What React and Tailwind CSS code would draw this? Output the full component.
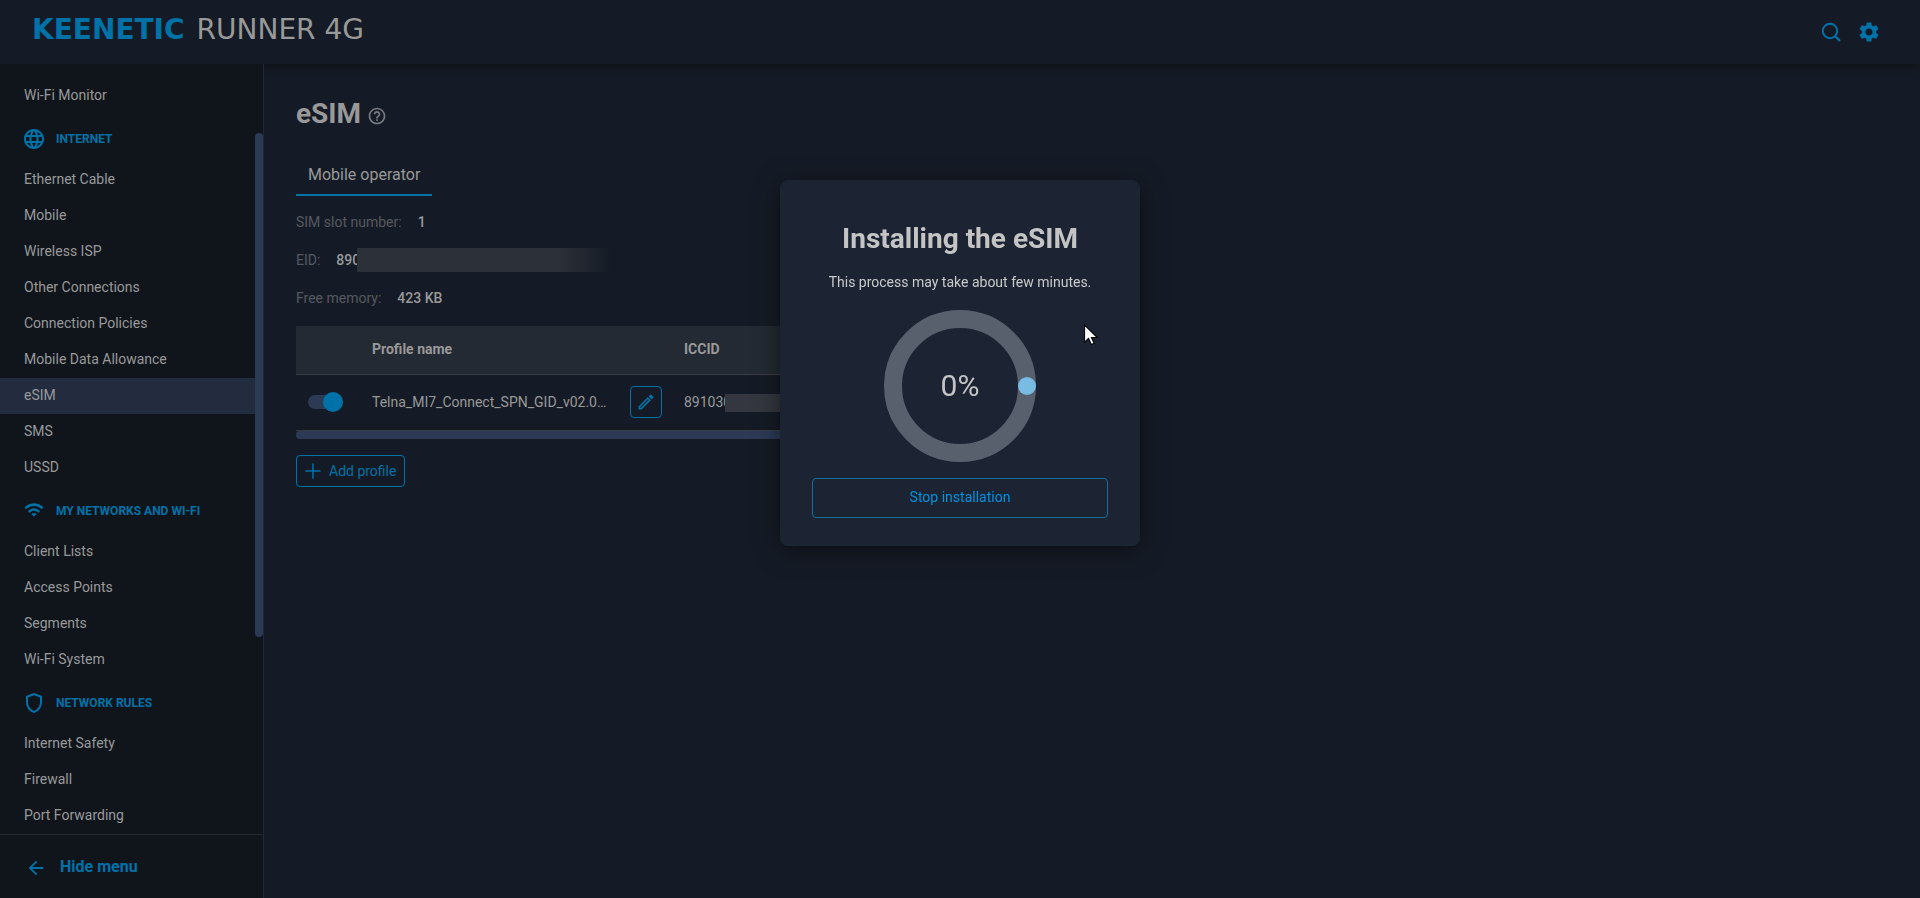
import { MdLanguage, MdOutlineShield, MdSettings, MdOutlineEdit, MdHelpOutline, MdArrowBack } from 'react-icons/md'
import { Plus } from 'lucide-react'

function SearchIcon({ className }) {
  return (
    <svg viewBox="0 0 24 24" fill="none" stroke="currentColor" strokeWidth="2" strokeLinecap="round" className={className}>
      <circle cx="11" cy="11" r="7.2" />
      <path d="M16.2 16.2l4.2 4.2" strokeWidth="2.2" />
    </svg>
  )
}

function WifiIcon({ className }) {
  return (
    <svg viewBox="0 0 24 24" fill="none" stroke="currentColor" strokeWidth="2.6" strokeLinecap="round" className={className}>
      <path d="M4.2 8.4a12.4 12.4 0 0 1 15.6 0" />
      <path d="M7.6 12.2a7.2 7.2 0 0 1 8.8 0" />
      <path d="M12 17.6l-2.6-2.4a3.8 3.8 0 0 1 5.2 0z" fill="currentColor" stroke="none" />
    </svg>
  )
}

const SECTIONS = [
  { items: ['Wi-Fi Monitor'] },
  {
    title: 'Internet',
    icon: MdLanguage,
    items: ['Ethernet Cable', 'Mobile', 'Wireless ISP', 'Other Connections', 'Connection Policies', 'Mobile Data Allowance', 'eSIM', 'SMS', 'USSD'],
  },
  { title: 'My Networks and Wi-Fi', icon: WifiIcon, items: ['Client Lists', 'Access Points', 'Segments', 'Wi-Fi System'] },
  { title: 'Network Rules', icon: MdOutlineShield, items: ['Internet Safety', 'Firewall', 'Port Forwarding'] },
]

const ACTIVE = 'eSIM'

function Header() {
  return (
    <header className="relative z-10 flex h-16 shrink-0 items-center justify-between bg-[#151b26] pl-8 pr-[39px] shadow-[0_2px_12px_rgba(0,0,0,0.45)]">
      <a href="#" className="flex items-center gap-3 pb-1 font-['DejaVu_Sans',sans-serif] text-[28px] leading-8">
        <span className="font-bold text-[#0072a8]">KEENETIC</span>
        <span className="text-[#999]">RUNNER 4G</span>
      </a>
      <div className="flex items-center gap-3.5 text-[#0072a8]">
        <button type="button" aria-label="Search"><SearchIcon className="size-6" /></button>
        <button type="button" aria-label="Settings"><MdSettings className="size-6" /></button>
      </div>
    </header>
  )
}

function Sidebar() {
  return (
    <aside className="relative z-20 flex w-66 shrink-0 flex-col border-r border-[#1f2838] bg-[#10151c]">
      <nav className="relative min-h-0 flex-1 overflow-hidden pt-3.5">
        {SECTIONS.map(({ title, icon: Icon, items }, i) => (
          <section key={i}>
            {title && (
              <h2 className="flex h-12 items-center gap-2.5 pl-5.5 pt-0.5 text-xs font-bold uppercase text-[#0072a8]">
                <Icon className="size-6" />
                {title}
              </h2>
            )}
            <ul>
              {items.map(item => (
                <li key={item}>
                  <a
                    href="#"
                    className={`flex h-9 items-center pb-0.5 pl-6 text-sm ${item === ACTIVE ? 'bg-[#222c3e]' : ''}`}
                  >
                    {item}
                  </a>
                </li>
              ))}
            </ul>
          </section>
        ))}
        {/* Scroll thumb */}
        <div className="absolute right-0 top-[69px] h-126 w-2 rounded-full bg-[#2c3a55]" />
      </nav>
      <button type="button" className="flex h-16 items-center gap-3 border-t border-[#22282e] pl-6 text-base font-bold text-[#0072a8]">
        <MdArrowBack className="size-6 pt-0.5" />
        Hide menu
      </button>
    </aside>
  )
}

function Redacted({ className }) {
  return <span aria-hidden="true" className={`absolute ${className}`} />
}

function Details() {
  return (
    <dl className="flex flex-col pt-2 text-sm">
      <div className="flex h-9.5 items-center gap-4 pb-0.5">
        <dt className="text-[#55595f]">SIM slot number:</dt>
        <dd className="font-medium">1</dd>
      </div>
      <div className="flex h-9.5 items-center gap-4 pb-0.5">
        <dt className="text-[#55595f]">EID:</dt>
        <dd className="relative font-medium">
          890
          <Redacted className="-top-0.5 left-[21px] h-6 w-63 bg-linear-to-r from-[#2c3039] from-80% to-[#161c26]" />
        </dd>
      </div>
      <div className="flex h-9.5 items-center gap-4 pb-0.5">
        <dt className="text-[#55595f]">Free memory:</dt>
        <dd className="font-medium">423 KB</dd>
      </div>
    </dl>
  )
}

function ProfileTable() {
  return (
    <div className="mt-2 max-w-200">
      <table className="w-full table-fixed text-left text-sm">
        <thead>
          <tr className="h-12 border-b border-[#3a3d42] bg-[#232a33]">
            <th className="w-16" aria-label="Enabled" />
            <th className="w-78 px-3 pb-0.5 font-bold">Profile name</th>
            <th className="px-3 pb-0.5 font-bold">ICCID</th>
          </tr>
        </thead>
        <tbody>
          <tr className="h-14 border-b border-[#3a3d42]">
            <td className="pl-3">
              <label className="relative flex w-[35px] cursor-pointer items-center">
                <input type="checkbox" defaultChecked aria-label="Enable profile" className="peer sr-only" />
                <span className="h-3.5 w-full rounded-full bg-[#2c3a55]" />
                <span className="absolute left-0 size-5 rounded-full bg-[#0072a8] peer-checked:left-[15px]" />
              </label>
            </td>
            <td className="pl-3">
              <div className="flex items-center">
                <span className="w-[258px] shrink-0">Telna_MI7_Connect_SPN_GID_v02.0…</span>
                <button type="button" aria-label="Edit profile name" className="flex size-8 shrink-0 items-center justify-center rounded border border-[#0072a8] text-[#0072a8]">
                  <MdOutlineEdit className="size-5" />
                </button>
              </div>
            </td>
            <td className="px-3">
              <span className="relative">
                891030
                <Redacted className="left-[41px] top-0 h-4.5 w-40 bg-[#34373f]" />
              </span>
            </td>
          </tr>
        </tbody>
      </table>
      <div className="h-2 rounded-full bg-[#2c3a55]" />
    </div>
  )
}

function InstallDialog() {
  return (
    <div className="fixed inset-0 z-30 flex items-start justify-center pt-45">
      <div role="dialog" aria-labelledby="install-title" className="relative flex w-90 flex-col items-center rounded-lg bg-[#1c2434] px-8 pb-7 pt-9 text-[#c4c4c4] shadow-[0_4px_24px_rgba(0,0,0,0.5)]">
        <h2 id="install-title" className="text-[28px] font-bold leading-[46px]">Installing the eSIM</h2>
        <p className="mt-2.5 text-sm text-[#cacaca]">This process may take about few minutes.</p>
        <div className="relative mt-4.5 flex size-38 items-center justify-center">
          <svg viewBox="0 0 152 152" className="absolute inset-0">
            <circle cx="76" cy="76" r="67" fill="none" stroke="#58606e" strokeWidth="18" />
            <circle cx="143" cy="76" r="9" fill="#78bbe3" />
          </svg>
          <span className="relative pb-0.5 text-[30px]">0%</span>
        </div>
        <button type="button" className="mt-4 h-10 w-full rounded border border-[#146f9f] pb-0.5 text-sm text-[#0093e0]">
          Stop installation
        </button>
        {/* Mouse pointer */}
        <svg viewBox="0 0 12 18" className="absolute left-76 top-36 h-[21px] w-3.5">
          <path d="M.5 1v14.5l3.4-3.2 2.4 5.2 2.4-1-2.4-5h4.9z" fill="#fff" stroke="#000" strokeWidth="0.9" />
        </svg>
      </div>
    </div>
  )
}

export default function App() {
  return (
    <div className="flex h-screen flex-col bg-[#151b26] font-[Roboto,sans-serif] text-[#999]">
      <Header />
      <div className="flex min-h-0 flex-1">
        <Sidebar />
        <main className="min-w-0 flex-1 px-8 pt-8">
          <h1 className="flex items-center gap-1.5 text-[28px] font-bold leading-9">
            eSIM
            <button type="button" aria-label="Help" className="pt-1 text-[#777b80]">
              <MdHelpOutline className="size-5" />
            </button>
          </h1>
          <div role="tablist" className="mt-5 flex">
            <button type="button" role="tab" aria-selected="true" className="h-11 border-b-2 border-[#0072a8] px-3 pt-1 text-base">
              Mobile operator
            </button>
          </div>
          <Details />
          <ProfileTable />
          <button type="button" className="mt-4 flex h-8 items-center gap-1 rounded border border-[#0072a8] pl-1 pr-2 text-sm text-[#0072a8]">
            <Plus className="size-6" strokeWidth={1.5} />
            Add profile
          </button>
        </main>
      </div>
      <InstallDialog />
    </div>
  )
}
